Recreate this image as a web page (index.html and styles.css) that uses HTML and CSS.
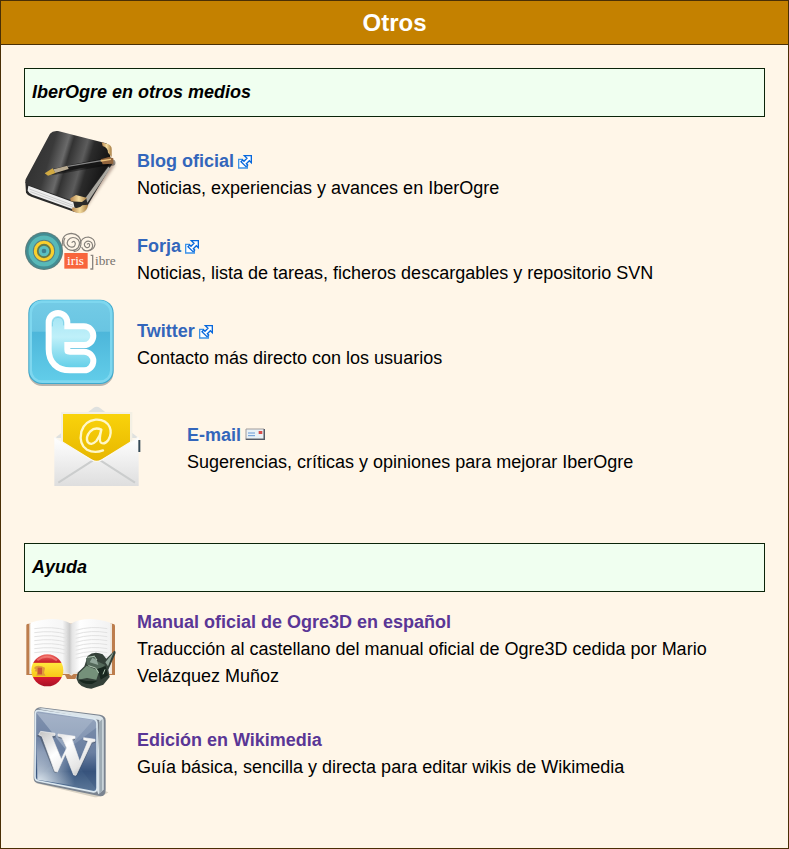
FILE: index.html
```html
<!DOCTYPE html>
<html lang="es">
<head>
<meta charset="utf-8">
<title>Otros</title>
<link rel="stylesheet" href="styles.css">
</head>
<body>
<svg class="defs" aria-hidden="true">
  <defs>
    <symbol id="external" viewBox="0 0 42 42">
      <path d="M15 13H2v26h26V27" fill="#fff" stroke="#3c93e8" stroke-width="4"/>
      <path d="M19 2h21v21l-6-6-9 9 4 4-5 5-15-15 5-5 4 4 9-9z" fill="#fff" stroke="#0868dc" stroke-width="4"/>
    </symbol>
  </defs>
</svg>
<main class="panel">
  <h1 class="panel-title">Otros</h1>
  <section class="section">
    <h2 class="section-title">IberOgre en otros medios</h2>
    <ul class="media">
      <li class="item">
        <svg class="icon" viewBox="27 33 279 252" aria-hidden="true">
          <defs>
            <linearGradient id="cover" x1="0" x2="1" y1="0" y2=".25">
              <stop offset="0" stop-color="#2c2c2c"/><stop offset=".35" stop-color="#3a3a3a"/><stop offset=".5" stop-color="#6a6a6a"/><stop offset=".56" stop-color="#333"/><stop offset=".72" stop-color="#5c5c5c"/><stop offset=".8" stop-color="#2b2b2b"/><stop offset="1" stop-color="#151515"/>
            </linearGradient>
            <linearGradient id="gold"><stop offset="0" stop-color="#b5824a"/><stop offset=".5" stop-color="#f5dda0"/><stop offset="1" stop-color="#a57a40"/></linearGradient>
            <filter id="soft"><feGaussianBlur stdDeviation="4"/></filter>
          </defs>
          <path d="M205 270L300 130 285 112 180 250z" fill="#826556" opacity=".55" filter="url(#soft)"/>
          <path d="M31 180l2 32q4 8 16 12l130 46q22 4 32-8l80-135-10-20z" fill="#2a2a2a"/>
          <path d="M40 191l135 50 5 23-128-46q-11-5-14-12z" fill="#eee"/>
          <path d="M43 201l132 49M46 209l132 48" stroke="#bbb" stroke-width="2"/>
          <path d="M213 226l67-92 6 5-69 103z" fill="#a9a7a0"/>
          <path d="M105 35q8-10 24-8l144 37q12 5 10 18l5 37-83 115q-9 11-24 5L38 188q-10-4-6-16z" fill="url(#cover)"/>
          <path d="M260 61l18 5q12 4 12 15v24l-11-13q0-15-16-20z" fill="url(#gold)"/>
          <path d="M166 229l17-10 34 9-16 12-34-2z" fill="url(#gold)"/>
          <path d="M170 265l3-9q20 6 29-6l17-2q-2 20-20 25-16 3-29-8z" fill="url(#gold)"/>
          <path d="M115 150l150-27 27-1" stroke="#000" stroke-width="19" opacity=".4" stroke-linecap="round" fill="none"/>
          <path d="M112 142l50-12 98-19 28-2q9 5 4 14l-96 16-80 17z" fill="#161616"/>
          <path d="M158 133l105-18" stroke="#858585" stroke-width="4"/>
          <path d="M89 154l24-15 9 14-23 8z" fill="#d1aa42"/>
          <path d="M115 142l42-11 4 10-40 12z" fill="#b8aa91"/>
          <path d="M257 112l25-7 13 4v16l-32 2z" fill="#91643c"/>
          <path d="M257 117l31-5" stroke="#edc47d" stroke-width="4"/>
        </svg>
        <div class="text"><a class="link" href="#blog">Blog oficial<svg class="external" aria-hidden="true"><use href="#external"/></svg></a><p class="note">Noticias, experiencias y avances en IberOgre</p></div>
      </li>
      <li class="item">
        <svg class="icon" viewBox="27 -12 279 252" aria-hidden="true">
          <circle cx="87" cy="87" r="57" fill="#5a8080"/>
          <circle cx="87" cy="87" r="50" fill="none" stroke="#3f8f96" stroke-width="6"/>
          <circle cx="87" cy="87" r="40" fill="none" stroke="#58b9b8" stroke-width="13"/>
          <circle cx="87" cy="87" r="26" fill="#667b4a" stroke="#fbd02c" stroke-width="9"/>
          <circle cx="87" cy="87" r="16" fill="#5cc0c0"/>
          <circle cx="87" cy="87" r="7" fill="#3f8090"/>
          <g fill="none" stroke="#85807a" stroke-width="3.5">
            <path d="M170 62q8-9 11 2 0 14-14 11-15-5-8-20 8-12 23-7 18 9 8 28-12 15-31 6-20-15-9-35"/>
            <path d="M144 72q-8-35 25-38 29 3 29 31-1 21-22 24"/>
            <path d="M216 67q6-6 8 2-1 10-11 7-9-7-2-15 9-8 19 1 8 14-6 23-18 6-24-10"/>
            <path d="M196 65q3-19 24-20 20 4 20 22-3 18-22 19"/>
          </g>
          <rect x="148" y="93" width="70" height="47" fill="#f8653c"/>
          <text x="156" y="130" class="logo-text" fill="#fff">iris</text>
          <path d="M227 100h6v41h-7" fill="none" stroke="#8a857f" stroke-width="4"/>
          <text x="240" y="130" class="logo-text" fill="#77736e">ibre</text>
        </svg>
        <div class="text"><a class="link" href="#forja">Forja<svg class="external" aria-hidden="true"><use href="#external"/></svg></a><p class="note">Noticias, lista de tareas, ficheros descargables y repositorio SVN</p></div>
      </li>
      <li class="item">
        <svg class="icon" viewBox="27 39 279 252" aria-hidden="true">
          <defs>
            <linearGradient id="sky" x2="0" y2="1"><stop offset="0" stop-color="#73cbe6"/><stop offset=".37" stop-color="#69c5e2"/><stop offset=".38" stop-color="#4db6da"/><stop offset="1" stop-color="#62cde9"/></linearGradient>
            <linearGradient id="letter" gradientUnits="userSpaceOnUse" x1="0" y1="80" x2="0" y2="232"><stop offset="0" stop-color="#a6e6f5"/><stop offset=".4" stop-color="#bff0f9"/><stop offset="1" stop-color="#66d0e9"/></linearGradient>
          </defs>
          <rect x="41" y="34" width="254" height="254" rx="40" fill="#8a8b87" opacity=".6"/>
          <rect x="40" y="29" width="256" height="253" rx="40" fill="#3fa9cd"/>
          <rect x="47" y="35" width="242" height="240" rx="34" fill="url(#sky)" stroke="#7ed7ef" stroke-width="8"/>
          <g fill="none" stroke-linecap="round" stroke-linejoin="round">
            <path d="M129 97v81q0 35 36 35h42M129 137h78" stroke="#fff" stroke-width="74"/>
            <path d="M129 97v81q0 35 36 35h42M129 137h78" stroke="url(#letter)" stroke-width="38"/>
            <path d="M112 108q-2-25 17-26 19 1 17 23" stroke="#84d4e9" stroke-width="3"/>
          </g>
        </svg>
        <div class="text"><a class="link" href="#twitter">Twitter<svg class="external" aria-hidden="true"><use href="#external"/></svg></a><p class="note">Contacto más directo con los usuarios</p></div>
      </li>
      <li class="item item-mail">
        <svg class="icon" viewBox="27 21 279 252" aria-hidden="true">
          <defs>
            <linearGradient id="yellow" x2="0" y2="1"><stop offset="0" stop-color="#f9d30b"/><stop offset="1" stop-color="#e7b600"/></linearGradient>
            <linearGradient id="paper" x2="0" y2="1"><stop offset="0" stop-color="#fff"/><stop offset="1" stop-color="#dedede"/></linearGradient>
          </defs>
          <path d="M30 114L145 24q10-7 20 0l116 90z" fill="#dfe1df"/>
          <path d="M48 36h214v110H48z" fill="#f4f0e4"/>
          <path d="M54 42h201v89L155 187 54 131z" fill="url(#yellow)"/>
          <path d="M28 111l112 69q15 8 30 0l111-69v147H28z" fill="url(#paper)"/>
          <path d="M40 248l104-67M270 248l-104-67" stroke="#cbcdcd" stroke-width="6"/>
          <path d="M28 111l112 69q15 8 30 0l111-69" fill="none" stroke="#faf8f2" stroke-width="4"/>
          <path d="M169 89q-19-9-33 5-15 17-8 32 10 13 26-3 12-15 15-34-8 33-1 39 10 7 22-8 12-20 4-39-12-24-42-22-34 4-43 36-8 38 17 54 22 12 48 2" fill="none" stroke="#fff8c9" stroke-width="7" stroke-linecap="round"/>
          <path d="M280 120h6v36h-6z" fill="#354a58"/>
        </svg>
        <div class="text"><a class="link" href="#email">E-mail<svg class="mail" viewBox="0 0 60 36" aria-hidden="true"><path d="M3 3h54v30H3z" fill="#e9f1f6" stroke="#a09c9c" stroke-width="3"/><path d="M2 34h56V3" fill="none" stroke="#555b67" stroke-width="4"/><path d="M9 15h21M9 23h21" stroke="#6798d4" stroke-width="3"/><path d="M41 9h11v9H41z" fill="#d84e49"/></svg></a><p class="note">Sugerencias, críticas y opiniones para mejorar IberOgre</p></div>
      </li>
    </ul>
  </section>
  <section class="section">
    <h2 class="section-title">Ayuda</h2>
    <ul class="help">
      <li class="item">
        <svg class="icon icon-book" viewBox="27 -3 279 243" aria-hidden="true">
          <defs>
            <linearGradient id="pages"><stop offset="0" stop-color="#fff"/><stop offset=".4" stop-color="#f6f6f6"/><stop offset=".49" stop-color="#cacaca"/><stop offset=".52" stop-color="#e4e4e4"/><stop offset=".62" stop-color="#fff"/><stop offset="1" stop-color="#f2f2f2"/></linearGradient>
            <linearGradient id="flag" x2="0" y2="1"><stop offset="0" stop-color="#ef6860"/><stop offset=".25" stop-color="#c61d29"/><stop offset=".28" stop-color="#ffe63c"/><stop offset=".7" stop-color="#f8c819"/><stop offset=".72" stop-color="#d71b2f"/><stop offset="1" stop-color="#a71127"/></linearGradient>
          </defs>
          <path d="M34 45q0-4 8-4h250q8 0 8 6v148H186l-5 12h-25l-6-12H34z" fill="#bd7d4c"/>
          <path d="M43 42h248v150H176l-7 5-7-5H43z" fill="#eee5da"/>
          <path d="M47 38q77-24 121 3 46-26 118-3v149q-81-16-118 6-44-22-121-6z" fill="url(#pages)"/>
          <path d="M58 56q55-8 98 5M58 68q55-8 98 5M58 80q55-8 98 5M58 92q55-8 98 5M58 104q55-8 98 5M58 116q55-8 98 5M58 128q55-8 98 5M182 61q47-14 95-5M182 73q47-14 95-5M182 85q47-14 95-5M182 97q47-14 95-5M182 109q47-14 95-5M182 121q47-14 95-5M182 133q47-14 95-5M182 145q47-14 95-5" fill="none" stroke="#e2e2e2" stroke-width="3"/>
          <circle cx="97" cy="181" r="48" fill="url(#flag)"/>
          <path d="M60 170q12-7 30 3l-3 16 5 8H64l3-12-8-1 3-6-5-3z" fill="#e09a3a"/>
          <path d="M68 173h13v20H68z" fill="#c95436"/>
          <path d="M67 151q28-22 59 0" fill="none" stroke="#ff9e92" stroke-width="6" opacity=".5"/>
          <path d="M184 205l4-17 20-19 10-31q19-17 45-5l11 13 24-24q7 2 1 14l-19 43 4 22-19 23-36 12q-38-2-45-31z" fill="#344139"/>
          <path d="M192 190l23-23 38 15-9 27-28-5-26 5z" fill="#75917a"/>
          <path d="M216 165l-3-20 26-10 6 18 26 12-18 14z" fill="#53685a"/>
          <path d="M224 157l8-14 13 6 5 16zM271 157l25-31-17 43z" fill="#91a69a"/>
          <path d="M248 176l24-7 7 27-22 13zM190 208l25 5 33-1-17 10q-31 2-41-14z" fill="#18271f"/>
          <path d="M220 167l22 7 9 15M218 142l20-3 8 11M270 178l-6 15" fill="none" stroke="#b1c7b3" stroke-width="3"/>
        </svg>
        <div class="text"><a class="link visited" href="#manual">Manual oficial de Ogre3D en español</a><p class="note">Traducción al castellano del manual oficial de Ogre3D cedida por Mario Velázquez Muñoz</p></div>
      </li>
      <li class="item">
        <svg class="icon icon-wiki" viewBox="27 24 279 276" aria-hidden="true">
          <defs>
            <linearGradient id="glass" x2="0" y2="1"><stop offset="0" stop-color="#97a6be"/><stop offset=".52" stop-color="#7b8fae"/><stop offset=".75" stop-color="#3b5880"/><stop offset="1" stop-color="#5c7899"/></linearGradient>
            <radialGradient id="glow" cx="0" cy="1" r=".65"><stop offset="0" stop-color="#f3fbff"/><stop offset="1" stop-color="#fff" stop-opacity="0"/></radialGradient>
            <linearGradient id="silver" x2="1" y2="1"><stop offset="0" stop-color="#c2c2c2"/><stop offset=".4" stop-color="#fff"/><stop offset=".75" stop-color="#e4e4e4"/><stop offset="1" stop-color="#999"/></linearGradient>
          </defs>
          <path d="M60 249L236 291q21 4 44-14l-35-14z" fill="#858071" opacity=".3"/>
          <path d="M58 37q2-14 18-15l179 22q18 3 17 19v206q0 19-16 20L68 250q-12-3-12-16z" fill="#7b8490"/>
          <path d="M70 27q5-3 12-2l171 22q14 3 13 17v205l-16 14-6-17L253 60z" fill="#dce5ea"/>
          <path d="M252 67l10-10v216l-9 9z" fill="#9eabb4"/>
          <path d="M61 42q0-12 11-10l161 24q13 3 13 15v192q0 15-14 12L71 243q-11-2-11-13z" fill="url(#glass)" stroke="#dce8f0" stroke-width="5"/>
          <path d="M64 38L154 151 64 239M154 151l90-68v185z" fill="#26436c" opacity=".2"/>
          <path d="M64 38l90 113L235 60z" fill="#d9e3ec" opacity=".22"/>
          <path d="M64 38l169 23q9 2 10 12v195L67 239z" fill="url(#glow)"/>
          <g id="w">
            <path d="M76 99l46 6v7l-9 2 29 69 14-34-15-32-11-4v-6l50 7v6l-9 3 25 66 25-61-12-5v-6l32 5v6l-10 3-46 98-8-2-28-62-24 54-8-2-42-104-10-5z" fill="#3c4654" opacity=".5"/>
            <path d="M77 94l43 6v6l-10 2 29 70 16-34-15-32-11-4v-6l51 7v6l-9 3 23 66 25-61-13-4v-6l34 5v6l-10 3-47 99-7-1-25-62-24 53-8-2-38-105-10-5z" fill="url(#silver)" stroke="#f2f2f2" stroke-width="2"/>
          </g>
        </svg>
        <div class="text"><a class="link visited" href="#edicion">Edición en Wikimedia</a><p class="note">Guía básica, sencilla y directa para editar wikis de Wikimedia</p></div>
      </li>
    </ul>
  </section>
</main>
</body>
</html>
```
FILE: styles.css
```css
* { box-sizing: border-box; }
body {
  margin: 0;
  background: #fff6e8;
  color: #000;
  font: 18px/27px "Liberation Sans", Arial, sans-serif;
}
h1, h2, p, ul { margin: 0; padding: 0; }
ul { list-style: none; }
.defs { position: absolute; width: 0; height: 0; }
.panel {
  min-height: 100vh;
  border: 1px solid #4a2f05;
}
.panel-title {
  padding: 8px;
  border-bottom: 1px solid #4a2f05;
  background: #c48100;
  color: #fff;
  font-size: 24px;
  line-height: 27px;
  text-align: center;
}
.section { padding: 0 23px; }
.section-title {
  padding: 10px 7px;
  border: 1px solid #0b2409;
  background: #f0fff0;
  font-size: 18px;
  font-style: italic;
  line-height: 27px;
}
.panel-title + .section { padding-top: 23px; }
.media {
  display: grid;
  gap: 1px;
  padding: 16px 0 52px;
}
.help {
  display: grid;
  gap: 18px;
  padding: 17px 0;
}
.item {
  display: flex;
  align-items: center;
  gap: 20px;
}
.item-mail {
  gap: 40px;
  margin-top: 19px;
  padding-left: 30px;
}
.icon {
  flex: none;
  width: 93px;
  height: 84px;
  overflow: visible;
}
.icon-book { height: 81px; }
.icon-wiki { height: 92px; }
.text { flex: 1; min-width: 0; }
.link {
  color: #3366bb;
  font-weight: bold;
  text-decoration: none;
}
.link:hover { text-decoration: underline; }
.visited { color: #5a3696; }
.external {
  width: 14px;
  height: 14px;
  margin-left: 4px;
  vertical-align: -2px;
}
.mail {
  width: 20px;
  height: 12px;
  margin-left: 4px;
  vertical-align: 1px;
}
.logo-text { font: 40px "Liberation Serif", serif; }
```
